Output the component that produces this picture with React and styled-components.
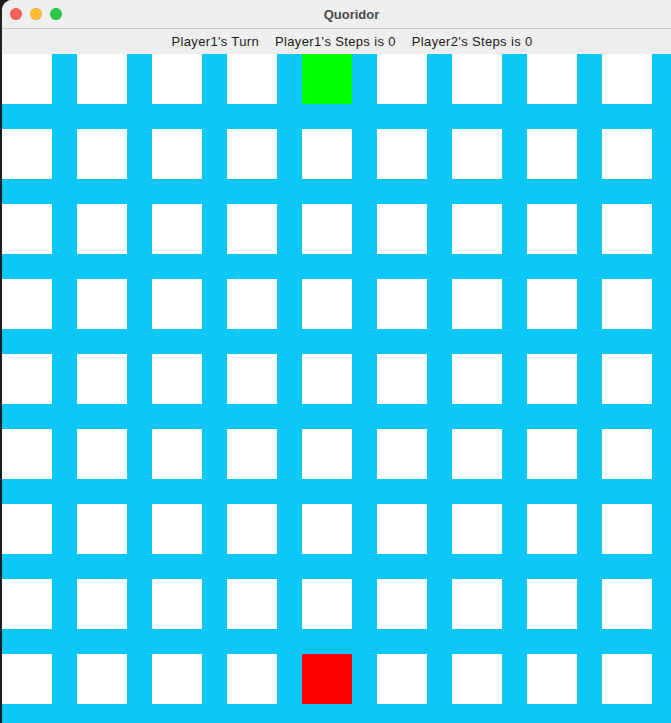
import React from 'react'
import styled, { createGlobalStyle } from 'styled-components'

const GlobalStyle = createGlobalStyle`
  html, body {
    margin: 0;
    padding: 0;
    background: #1e1e1e;
    overflow: hidden;
  }
`

const Desk = styled.div`
  width: 671px;
  height: 723px;
  display: flex;
  background: #1e1e1e;
`

const Window = styled.div`
  margin-left: 2px;
  flex: 1;
  display: flex;
  flex-direction: column;
  border-top-left-radius: 10px;
  overflow: hidden;
  background: #ececec;
`

const TitleBar = styled.div`
  height: 28px;
  display: flex;
  align-items: center;
  padding-left: 8px;
  background: #efefef;
  border-bottom: 1px solid #c6c6c6;
`

const Lights = styled.div`
  display: flex;
  gap: 8px;
`

const Light = styled.span`
  width: 12px;
  height: 12px;
  border-radius: 50%;
  background: ${p => p.color};
  box-shadow: inset 0 0 0 0.5px rgba(0, 0, 0, 0.15);
`

const Title = styled.div`
  flex: 1;
  text-align: center;
  padding-left: 30px;
  margin-left: -60px;
  font-family: "Liberation Sans", Arial, sans-serif;
  font-weight: bold;
  font-size: 13px;
  color: #4a4a4a;
`

const StatusBar = styled.div`
  height: 25px;
  display: flex;
  justify-content: center;
  align-items: center;
  gap: 16px;
  padding-left: 31px;
  background: #eeeeee;
  font-family: "Liberation Sans", Arial, sans-serif;
  font-size: 13px;
  letter-spacing: 0.35px;
  color: #1a1a1a;
`

const Board = styled.div`
  flex: 1;
  display: grid;
  grid-template-columns: repeat(9, 50px);
  grid-auto-rows: 50px;
  gap: 25px;
  background: #0bc8f8;
  overflow: hidden;
`

const Cell = styled.div`
  background: ${p => p.player === 1 ? '#00ff00' : p.player === 2 ? '#ff0000' : '#ffffff'};
`

const cells = []
for (let r = 0; r < 9; r++) {
  for (let c = 0; c < 9; c++) {
    let player = 0
    if (r === 0 && c === 4) player = 1
    if (r === 8 && c === 4) player = 2
    cells.push({ key: r + '-' + c, player })
  }
}

export default function App() {
  return (
    <Desk>
      <GlobalStyle />
      <Window>
        <TitleBar>
          <Lights>
            <Light color="#fe5f57" />
            <Light color="#febc2e" />
            <Light color="#28c840" />
          </Lights>
          <Title>Quoridor</Title>
        </TitleBar>
        <StatusBar>
          <span>Player1's Turn</span>
          <span>Player1's Steps is 0</span>
          <span>Player2's Steps is 0</span>
        </StatusBar>
        <Board>
          {cells.map(c => <Cell key={c.key} player={c.player} />)}
        </Board>
      </Window>
    </Desk>
  )
}
